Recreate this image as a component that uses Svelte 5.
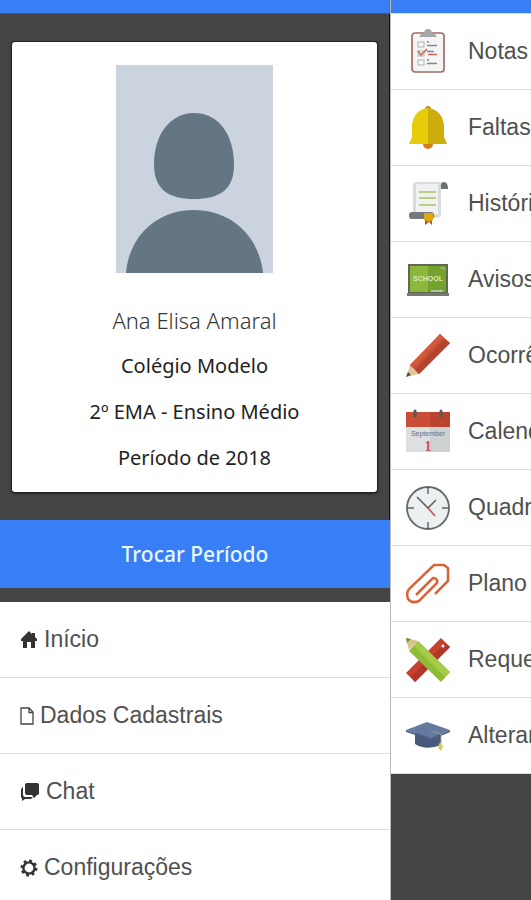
<script lang="ts">
  const student = {
    name: 'Ana Elisa Amaral',
    details: ['Colégio Modelo', '2º EMA - Ensino Médio', 'Período de 2018']
  };

  const menu = [
    { icon: 'home', label: 'Início' },
    { icon: 'file', label: 'Dados Cadastrais' },
    { icon: 'chat', label: 'Chat' },
    { icon: 'gear', label: 'Configurações' }
  ];

  const pages = [
    { icon: 'grades', label: 'Notas' },
    { icon: 'bell', label: 'Faltas' },
    { icon: 'scroll', label: 'Histórico' },
    { icon: 'board', label: 'Avisos' },
    { icon: 'pencil', label: 'Ocorrências' },
    { icon: 'calendar', label: 'Calendário' },
    { icon: 'clock', label: 'Quadro de Horários' },
    { icon: 'clip', label: 'Plano de Aula' },
    { icon: 'tools', label: 'Requerimentos' },
    { icon: 'cap', label: 'Alterar Senha' }
  ];
</script>

<div class="app">
  <aside class="side">
    <div class="bar"></div>
    <div class="profile">
      <section class="card">
        <svg class="photo" viewBox="0 0 157 208" role="img" aria-label="Foto do aluno">
          <rect width="157" height="208" fill="#cad3de" />
          <path d="M78 48C103 48 118 70 118 100C118 125 103 134 78 134C53 134 38 125 38 99C38 70 54 48 78 48Z" fill="#647684" />
          <path d="M10 208C13 171 41 145 78 145C115 145 143 171 147 208Z" fill="#647684" />
        </svg>
        <h1>{student.name}</h1>
        {#each student.details as line}
          <p>{line}</p>
        {/each}
      </section>
    </div>
    <button class="switch" type="button">Trocar Período</button>

    <nav class="menu" aria-label="Menu">
      {#each menu as item (item.icon)}
        <a class="row" href="#{item.icon}">
          {#if item.icon === 'home'}
            <svg class="glyph" width="18" height="18" viewBox="0 0 18 18" aria-hidden="true">
              <path d="M9 0L1 8V10H3V17H7V11H11V17H15V10H17V8L15 6V2H12V3Z" fill="#333" />
            </svg>
          {:else if item.icon === 'file'}
            <svg class="glyph" width="14" height="18" viewBox="0 0 14 18" aria-hidden="true">
              <path d="M1 1H9L13 5V17H1ZM9 1V5.500H13" fill="none" stroke="#444" stroke-width="1.300" />
            </svg>
          {:else if item.icon === 'chat'}
            <svg class="glyph" width="20" height="18" viewBox="0 0 20 18" aria-hidden="true">
              <path d="M7 0H17Q19 0 19 2V10Q19 12 17 12L14 15L12 12H7Q5 12 5 10V2Q5 0 7 0Z" fill="#333" />
              <path d="M3 4Q1 5 1 7V14Q1 15 2 15V18L5 16H11L13 14H5Q3 14 3 11Z" fill="#333" />
            </svg>
          {:else}
            <svg class="glyph" width="18" height="18" viewBox="0 0 18 18" aria-hidden="true">
              <circle cx="9" cy="9" r="5.600" fill="none" stroke="#333" stroke-width="2.400" />
              <circle cx="9" cy="9" r="7.300" fill="none" stroke="#333" stroke-width="2.400" stroke-dasharray="2.730 3" />
            </svg>
          {/if}
          <span>{item.label}</span>
        </a>
      {/each}
    </nav>
  </aside>

  <main class="content">
    <div class="bar"></div>
    <nav class="pages" aria-label="Páginas">
      {#each pages as page (page.icon)}
        <a class="row" href="#{page.icon}">
          <svg class="icon" width="44" height="44" viewBox="0 0 44 44" aria-hidden="true">
            {#if page.icon === 'grades'}
              <rect x="6" y="3" width="32" height="39" rx="3" fill="#f5f5f6" stroke="#a36c69" stroke-width="1.700" />
              <path d="M15 4H18Q18 -1 22 -1T26 4H29L31 7H13Z" fill="#a5a7ab" />
              <g fill="none" stroke="#a9adb1" stroke-width=".9">
                <rect x="12" y="12" width="6" height="5" />
                <rect x="12" y="21" width="6" height="5" />
                <rect x="12" y="30" width="6" height="5" />
              </g>
              <path d="M21 12H23M21 15.500H31M21 21.500H28M21 30H23M21 33.500H31" stroke="#85888c" stroke-width="1.300" />
              <path d="M12 21L15 25L21 19M22 24.500H31" fill="none" stroke="#c66b58" stroke-width="1.700" />
            {:else if page.icon === 'bell'}
              <circle cx="22" cy="3" r="3" fill="#cf861d" />
              <circle cx="22" cy="38" r="5" fill="#d87d19" />
              <path d="M22 2C12 3 7 10 6 19V31L3 38H22Z" fill="#e5cd0b" />
              <path d="M22 2C32 3 37 10 38 19V31L41 38H22Z" fill="#cdae0c" />
            {:else if page.icon === 'scroll'}
              <path d="M7 4Q7 0 11 0H38L35 5V31Q35 36 30 36H7Z" fill="#d8dcdf" />
              <path d="M10 2H32V32H10Z" fill="#f0f2f2" />
              <path d="M35 7Q34 0 38 0T42 7Z" fill="#6d7175" />
              <path d="M13 10H30M13 16H30M13 23H30" stroke="#b9cf84" stroke-width="1.800" />
              <rect x="3" y="30" width="25" height="7" rx="3" fill="#74777b" />
              <path d="M19 36H26V43L23 40L19 43Z" fill="#b8503c" />
              <path d="M18 31H27V38L23 40L18 38Z" fill="#dfa60e" />
            {:else if page.icon === 'board'}
              <path d="M2 6H42V36H2Z" fill="#61684f" />
              <path d="M4 8H22V34H4Z" fill="#8bb73c" />
              <path d="M22 8H40V34H22Z" fill="#74a22e" />
              <path d="M1 35H43V38H1Z" fill="#737a73" />
              <path d="M25 32H37V34H25Z" fill="#afc79a" />
              <path d="M34 10H38V12" stroke="#a8c788" fill="none" />
              <text x="22" y="23" text-anchor="middle" fill="#dceab9" class="school">SCHOOL</text>
            {:else if page.icon === 'pencil'}
              <path d="M0 43L4 31L13 40Z" fill="#dfc79b" />
              <path d="M0 43L2 38L5 41Z" fill="#59483e" />
              <path d="M4 31L34 0L44 9L13 40Z" fill="#c34f35" />
              <path d="M9 36L39 5L44 9L13 40Z" fill="#b3442f" />
              <path d="M34 0L37 3L7 34L4 31Z" fill="#d35b3c" />
            {:else if page.icon === 'calendar'}
              <path d="M0 2H44V17H0Z" fill="#ca4d35" />
              <path d="M24 2H44V17H24Z" fill="#bb432f" />
              <path d="M0 17H24V42H0Z" fill="#dedfe0" />
              <path d="M24 17H44V42H24Z" fill="#cfd0d2" />
              <path d="M9 1V6M35 1V6" stroke="#58595b" stroke-width="3" stroke-linecap="round" />
              <text x="22" y="26" text-anchor="middle" fill="#6d7075" class="month">September</text>
              <text x="22" y="41" text-anchor="middle" fill="#c94e56" class="day">1</text>
            {:else if page.icon === 'clock'}
              <circle cx="22" cy="22" r="21" fill="#edf0f1" stroke="#63676b" stroke-width="1.800" />
              <path d="M22 2V8M22 36V42M2 22H8M36 22H42" stroke="#63676b" stroke-width="1.500" />
              <path d="M11 11L22 22L30 14" fill="none" stroke="#63676b" stroke-width="1.700" />
              <path d="M22 22L29 30" stroke="#cf5961" stroke-width="1.800" />
            {:else if page.icon === 'clip'}
              <path d="M29 32L42 19V6L38 3H28L3 27Q0 31 2 37Q6 42 13 39L31 21Q32 16 27 16L10 33" fill="none" stroke="#d86436" stroke-width="2.500" />
            {:else if page.icon === 'tools'}
              <path d="M0 35L35 0L44 9L9 44Z" fill="#c6412e" />
              <path d="M5 39L39 5L44 9L9 44Z" fill="#ae3728" />
              <circle cx="37" cy="8" r="1.500" fill="#fff" />
              <path d="M0 0L12 3L3 12Z" fill="#d9c48c" />
              <path d="M0 0L5 1L1 5Z" fill="#719632" />
              <path d="M3 13L12 3L44 34L35 44Z" fill="#8cbb35" />
              <path d="M8 8L12 3L44 34L39 39Z" fill="#a5cb47" />
            {:else}
              <path d="M9 17V30Q20 37 35 31V18Z" fill="#485a7b" />
              <path d="M0 16L21 8L44 16L25 24Z" fill="#657aa0" />
              <path d="M0 16L25 24L44 16V18L25 26L0 18Z" fill="#4d6186" />
              <path d="M25 17L35 20V30" fill="none" stroke="#a9ae67" stroke-width=".8" />
              <path d="M34 28L37 32L35 37L32 34Z" fill="#d4cf55" />
            {/if}
          </svg>
          <span>{page.label}</span>
        </a>
      {/each}
    </nav>
  </main>
</div>

<style>
  :global(body) { margin: 0; background: #444; }
  .app {
    display: grid; grid-template-columns: minmax(0, 1fr) 141px;
    height: 100vh; overflow: hidden; background: #444;
    font-family: "Liberation Sans", Arial, sans-serif; font-size: 23px; color: #505050;
  }
  .side, .content { min-width: 0; box-sizing: border-box; }
  .bar { height: 13px; background: #387ef5; border-bottom: 1px solid #315b9d; }
  .content { border-left: 1px solid #bbb; }
  .content .bar { border-bottom-color: #dcdcdc; }
  .side .bar { border-right: 1px solid #3473df; }

  .profile { padding: 28px 12px; border-right: 1px solid #111; }
  .card {
    display: flex; flex-direction: column; align-items: center; box-sizing: border-box;
    padding: 23px 12px 11px; border-radius: 3px; background: #fff;
    box-shadow: 0 0 0 1px #222, 0 1px 3px #000;
    font-family: "Noto Sans", "Open Sans", sans-serif; color: #222;
  }
  .photo { width: 157px; height: 208px; margin-bottom: 32px; }
  h1 { margin: 0 0 8px; font-size: 22px; line-height: 30px; font-weight: 300; color: #333; }
  p { margin: 0; padding: 8px 0; font-size: 20px; line-height: 30px; font-weight: 400; }

  .switch {
    display: block; width: 100%; height: 68px; padding: 0; border: 0;
    background: #387ef5; color: #e8f7ff; cursor: pointer;
    font: 500 21px/30px "Noto Sans", "Open Sans", sans-serif;
  }

  .menu { margin-top: 14px; background: #fff; }
  .row {
    display: flex; align-items: center; height: 75px;
    border-bottom: 1px solid #ddd; background: #fff;
    color: inherit; text-decoration: none; white-space: nowrap;
  }
  .menu .row { gap: 6px; padding-left: 20px; }
  .glyph { flex: none; }

  .pages .row { gap: 18px; padding-left: 15px; overflow: hidden; }
  .icon { flex: none; overflow: visible; }
  .school { font: bold 7px "Liberation Sans", sans-serif; }
  .month { font: 7px "Liberation Sans", sans-serif; }
  .day { font: bold 14px "Liberation Serif", serif; }
</style>
